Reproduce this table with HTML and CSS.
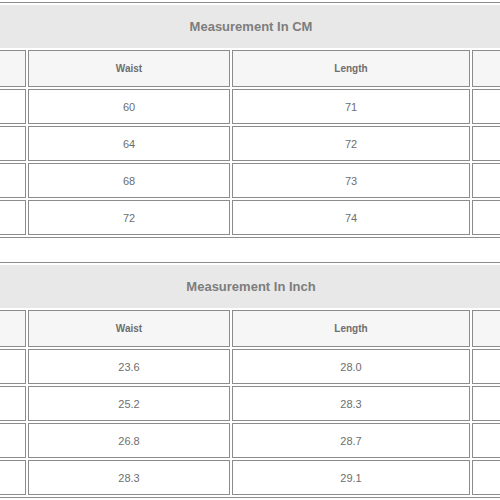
FILE: index.html
```html
<!DOCTYPE html>
<html>
<head>
<meta charset="utf-8">
<link rel="stylesheet" href="styles.css">
</head>
<body>
<div class="page">
  <table class="size-table">
    <colgroup><col class="c1"><col class="c2"><col class="c3"><col class="c4"></colgroup>
    <tr><th class="title" colspan="4">Measurement In CM</th></tr>
    <tr class="head"><td>Size</td><td>Waist</td><td>Length</td><td>Hip</td></tr>
    <tr><td>S</td><td>60</td><td>71</td><td>90</td></tr>
    <tr><td>M</td><td>64</td><td>72</td><td>94</td></tr>
    <tr><td>L</td><td>68</td><td>73</td><td>98</td></tr>
    <tr><td>XL</td><td>72</td><td>74</td><td>102</td></tr>
  </table>
  <table class="size-table">
    <colgroup><col class="c1"><col class="c2"><col class="c3"><col class="c4"></colgroup>
    <tr><th class="title" colspan="4">Measurement In Inch</th></tr>
    <tr class="head"><td>Size</td><td>Waist</td><td>Length</td><td>Hip</td></tr>
    <tr><td>S</td><td>23.6</td><td>28.0</td><td>35.4</td></tr>
    <tr><td>M</td><td>25.2</td><td>28.3</td><td>37.0</td></tr>
    <tr><td>L</td><td>26.8</td><td>28.7</td><td>38.6</td></tr>
    <tr><td>XL</td><td>28.3</td><td>29.1</td><td>40.2</td></tr>
  </table>
</div>
</body>
</html>
```
FILE: styles.css
```css
html, body {
  margin: 0;
  padding: 0;
  background: #ffffff;
  overflow: hidden;
}
.page {
  padding-top: 2px;
  margin-left: -150px;
  width: 802px;
  font-family: "Liberation Sans", Arial, sans-serif;
}
.size-table {
  width: 802px;
  border-collapse: separate;
  border-spacing: 2px;
  border: 1px solid #8c8c8c;
  table-layout: fixed;
  margin-bottom: 24px;
}
.size-table td, .size-table th {
  border: 1px solid #8c8c8c;
  text-align: center;
  padding: 0;
  color: #6e6e6e;
  font-size: 11px;
  height: 33px;
}
.size-table th.title {
  background: #e8e8e8;
  border-color: #e8e8e8;
  color: #7d7d7d;
  font-size: 13px;
  font-weight: bold;
  height: 41px;
}
.size-table tr.head td {
  background: #f6f6f6;
  font-weight: bold;
  font-size: 10px;
  height: 35px;
}
.c1 { width: 173px; }
.c2 { width: 202px; }
.c3 { width: 238px; }
```
